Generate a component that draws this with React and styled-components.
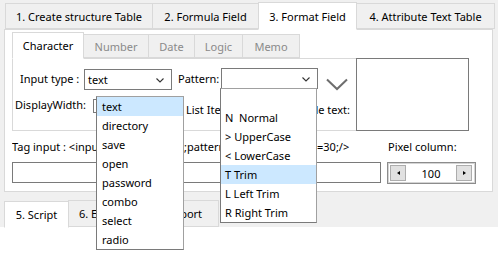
import React from 'react';
import styled, { createGlobalStyle } from 'styled-components';

const Global = createGlobalStyle`
  html, body { margin: 0; padding: 0; background: #fff; }
  body { font-family: "Noto Sans", "Segoe UI", sans-serif; font-size: 11px; color: #000; }
  * { box-sizing: border-box; }
`;

const Page = styled.div`
  position: relative;
  width: 498px;
  height: 274px;
  background: #fff;
`;

const Window = styled.div`
  width: 498px;
  height: 227px;
  background: #f0f0f0;
`;

const TabStrip = styled.div`
  display: flex;
  align-items: flex-end;
  height: ${p => p.$h}px;
  padding-left: ${p => p.$pl}px;
  position: relative;
  z-index: 1;
`;

const Tab = styled.div`
  flex: none;
  width: ${p => p.$w}px;
  height: ${p => (p.$active ? p.$ha : p.$h)}px;
  margin-left: -1px;
  margin-bottom: ${p => (p.$active ? '-1px' : '0')};
  display: flex;
  align-items: center;
  justify-content: ${p => (p.$left ? 'flex-start' : 'center')};
  padding-left: ${p => (p.$left ? p.$left : 0)}px;
  white-space: nowrap;
  background: ${p => (p.$active ? '#fff' : '#f0f0f0')};
  color: ${p => (p.$dim && !p.$active ? '#8a8a8a' : '#000')};
  border: 1px solid #d9d9d9;
  border-bottom: ${p => (p.$active ? '1px solid #fff' : '1px solid #d9d9d9')};
  &:first-child { margin-left: 0; }
`;

const OuterPanel = styled.div`
  margin: 0 5px 0 4px;
  height: 163px;
  background: #fff;
  border: 1px solid #d9d9d9;
  padding: 1px 0 0 7px;
  display: flex;
  flex-direction: column;
`;

const TopArea = styled.div`
  display: flex;
  align-items: flex-end;
  margin-top: 1px;
`;

const InnerTabs = styled.div`
  width: 344px;
  display: flex;
  flex-direction: column;
`;

const InnerPanel = styled.div`
  height: 73px;
  border: 1px solid #d9d9d9;
  border-right: none;
  background: #fff;
  padding: 9px 0 0 0;
  display: flex;
  flex-direction: column;
`;

const Row = styled.div`
  display: flex;
  align-items: ${p => p.$align || 'center'};
  height: ${p => p.$h}px;
  margin-top: ${p => p.$mt || 0}px;
`;

const Label = styled.span`
  white-space: nowrap;
  margin-left: ${p => p.$ml || 0}px;
  margin-top: ${p => p.$mt || 0}px;
  width: ${p => (p.$w ? p.$w + 'px' : 'auto')};
  flex: none;
  overflow: hidden;
`;

const RightLabel = styled.span`
  white-space: nowrap;
  margin-left: auto;
  margin-right: 6px;
  margin-top: ${p => p.$mt || 0}px;
`;

const Select = styled.div`
  position: relative;
  flex: none;
  width: ${p => p.$w}px;
  height: ${p => p.$h}px;
  margin-top: ${p => p.$mt || 0}px;
  border: 1px solid #7a7a7a;
  background: #fff;
  display: flex;
  align-items: center;
  padding-left: 3px;
`;

const Caret = styled.svg`
  position: absolute;
  right: ${p => p.$r}px;
  top: 50%;
  margin-top: -2px;
`;

const BigChevron = styled.svg`
  flex: none;
  margin-left: 8px;
  margin-top: 10px;
`;

const MultiBox = styled.div`
  flex: none;
  width: 113px;
  height: 73px;
  border: 1px solid #7a7a7a;
  background: #fff;
`;

const SmallBox = styled.div`
  flex: none;
  width: 40px;
  height: 14px;
  margin-left: 0;
  margin-top: 3px;
  border: 1px solid #7a7a7a;
`;

const TextBox = styled.div`
  flex: none;
  width: 369px;
  height: 21px;
  border: 1px solid #7a7a7a;
  background: #fff;
`;

const Spinner = styled.div`
  flex: none;
  margin-left: 6px;
  width: 89px;
  height: 22px;
  border: 1px solid #8c8c8c;
  box-shadow: inset 0 0 0 1px #d4d4d4;
  display: flex;
  align-items: center;
  padding: 0 3px 0 2px;
`;

const SpinBtn = styled.div`
  flex: none;
  width: 16px;
  height: 16px;
  background: #e1e1e1;
  border: 1px solid #adadad;
  display: flex;
  align-items: center;
  justify-content: center;
`;

const SpinValue = styled.div`
  flex: 1;
  text-align: center;
`;

const Tri = styled.div`
  width: 0;
  height: 0;
  border-top: 2.5px solid transparent;
  border-bottom: 2.5px solid transparent;
  ${p => (p.$dir === 'left' ? 'border-right: 3px solid #000;' : 'border-left: 3px solid #000;')}
`;

const BottomStrip = styled.div`
  display: flex;
  align-items: flex-end;
  height: 35px;
  padding-left: 4px;
`;

const List = styled.div`
  position: absolute;
  left: ${p => p.$x}px;
  top: ${p => p.$y}px;
  width: ${p => p.$w}px;
  background: #fff;
  border: 1px solid #7a7a7a;
  border-top-color: #a0a0a0;
  border-right-color: #a0a0a0;
  z-index: 5;
`;

const Item = styled.div`
  height: 19px;
  line-height: 19px;
  padding-left: ${p => p.$pl}px;
  white-space: pre;
  background: ${p => (p.$hl ? '#cce8ff' : '#fff')};
`;

const SmallCaret = ({ r }) => (
  <Caret $r={r} width="8" height="5" viewBox="0 0 8 5">
    <path d="M0.5 0.5 L4 4 L7.5 0.5" fill="none" stroke="#333" strokeWidth="1.1" />
  </Caret>
);

const typeItems = ['text', 'directory', 'save', 'open', 'password', 'combo', 'select', 'radio'];
const patternItems = ['', 'N  Normal', '> UpperCase', '< LowerCase', 'T Trim', 'L Left Trim', 'R Right Trim'];

export default function App() {
  return (
    <Page>
      <Global />
      <Window>
        <TabStrip $h={29} $pl={5}>
          <Tab $w={148} $h={26} $ha={28}>1. Create structure Table</Tab>
          <Tab $w={107} $h={26} $ha={28}>2. Formula Field</Tab>
          <Tab $w={99} $h={26} $ha={28} $active>3. Format Field</Tab>
          <Tab $w={139} $h={26} $ha={28}>4. Attribute Text Table</Tab>
        </TabStrip>
        <OuterPanel>
          <TopArea>
            <InnerTabs>
              <TabStrip $h={26} $pl={0}>
                <Tab $w={72} $h={24} $ha={27} $active $dim>Character</Tab>
                <Tab $w={66} $h={24} $ha={27} $dim>Number</Tab>
                <Tab $w={47} $h={24} $ha={27} $dim>Date</Tab>
                <Tab $w={49} $h={24} $ha={27} $dim>Logic</Tab>
                <Tab $w={58} $h={24} $ha={27} $dim>Memo</Tab>
              </TabStrip>
              <InnerPanel>
                <Row $h={22} $align="flex-start">
                  <Label $ml={7} $mt={3} $w={64}>Input type :</Label>
                  <Select $w={88} $h={21} $mt={1}>
                    text
                    <SmallCaret r={7} />
                  </Select>
                  <Label $ml={6} $mt={3} $w={43}>Pattern:</Label>
                  <Select $w={97} $h={21} $mt={0}>
                    <SmallCaret r={7} />
                  </Select>
                  <BigChevron width="22" height="13" viewBox="0 0 22 13">
                    <path d="M1 1.5 L11 11 L21 1.5" fill="none" stroke="#6e6e6e" strokeWidth="2" />
                  </BigChevron>
                </Row>
                <Row $h={24} $mt={6} $align="flex-start">
                  <Label $ml={2} $mt={1} $w={78}>DisplayWidth:</Label>
                  <SmallBox />
                  <Label $ml={53} $mt={6}>List Items:</Label>
                  <RightLabel $mt={6}>Sample text:</RightLabel>
                </Row>
              </InnerPanel>
            </InnerTabs>
            <MultiBox />
          </TopArea>
          <Row $h={17} $mt={7}>
            <Label $w={84}>Tag input : &lt;input</Label>
            <Label $w={88}> type=&quot;text&quot;</Label>
            <Label $w={133}>;pattern=&quot;T&quot;;displaywidth</Label>
            <Label $w={71}>=30;/&gt;</Label>
            <Label>Pixel column:</Label>
          </Row>
          <Row $h={22} $mt={7} $align="flex-start">
            <TextBox />
            <Spinner>
              <SpinBtn><Tri $dir="left" /></SpinBtn>
              <SpinValue>100</SpinValue>
              <SpinBtn><Tri $dir="right" /></SpinBtn>
            </Spinner>
          </Row>
        </OuterPanel>
        <BottomStrip>
          <Tab $w={65} $h={27} $ha={27} $active>5. Script</Tab>
          <Tab $w={79} $h={27} $ha={27} $left={10}>6. Export</Tab>
          <Tab $w={73} $h={27} $ha={27} $left={8}>7. Report</Tab>
        </BottomStrip>
      </Window>
      <List $x={96} $y={96} $w={88}>
        {typeItems.map((t, i) => (
          <Item key={t} $pl={5} $hl={i === 0}>{t}</Item>
        ))}
      </List>
      <List $x={220} $y={88} $w={97}>
        {patternItems.map((t, i) => (
          <Item key={i} $pl={4} $hl={i === 4}>{t}</Item>
        ))}
      </List>
    </Page>
  );
}
